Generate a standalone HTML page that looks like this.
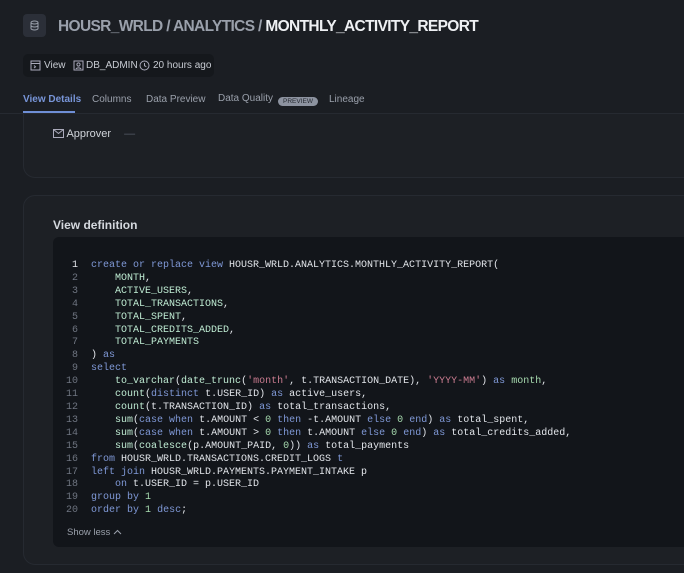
<!DOCTYPE html>
<html><head><meta charset="utf-8"><style>
*{margin:0;padding:0;box-sizing:border-box}
html,body{width:684px;height:573px;overflow:hidden}
body{background:#1b1e23;font-family:"Liberation Sans",sans-serif;position:relative;color:#d8dbe0}
.ic{position:absolute;left:23px;top:14px;width:23px;height:23px;background:#2b2f38;border-radius:4px}
.title{position:absolute;left:58px;top:18px;font-size:15.5px;font-weight:bold;color:#9aa0ab;letter-spacing:-0.65px;white-space:nowrap}
.title b{color:#eef0f3}
.meta{position:absolute;left:23px;top:54px;width:191px;height:23px;background:#15181c;border-radius:5px;font-size:10px;color:#c7cbd2;white-space:nowrap}
.meta span{position:absolute;top:6px}
.tabs{position:absolute;left:0;top:90px;width:684px;height:24px;border-bottom:1px solid #262a31;font-size:10px;color:#9aa0ab}
.tabs span{position:absolute;top:4px;white-space:nowrap}
.tabs .act{color:#7895d8;left:23px;font-weight:bold}
.ul{position:absolute;left:23px;top:111px;width:52px;height:2px;background:#6f8fd6}
.pv{display:inline-block;background:#8d93a0;color:#262a31;font-size:6.5px;border-radius:6px;padding:1px 5px;margin-left:5px;vertical-align:1px}
.card1{position:absolute;left:23px;top:113px;width:700px;height:65px;border:1px solid #262a31;border-top:none;border-radius:0 0 12px 12px;background:#1d2025}
.card2{position:absolute;left:23px;top:195px;width:700px;height:370px;border:1px solid #262a31;border-radius:12px;background:#1d2025}
.appr{position:absolute;left:53px;top:128px;font-size:11px;color:#d0d4da}
.vd{position:absolute;left:53px;top:218px;font-size:12px;font-weight:bold;color:#d4d8de}
.code{position:absolute;left:53px;top:237px;width:700px;height:310px;background:#12151a;border-radius:6px}
pre{position:absolute;left:60px;top:260px;font-family:"Liberation Mono",monospace;font-size:10px;line-height:12.9px;color:#e2e5ea}
.n{display:inline-block;width:18px;text-align:right;color:#6e7480;margin-right:13px}
.n1{color:#e2e5ea}
.k{color:#7f98d6}.f{color:#bfecd3}.s{color:#c97b8f}.g{color:#a8dcb0}
.sl{position:absolute;left:67px;top:527px;font-size:9.5px;color:#9aa0ab}
</style></head><body>
<div class="card1"></div>
<div class="ic"><svg width="23" height="23" viewBox="0 0 23 23"><ellipse cx="11.5" cy="8.5" rx="3.5" ry="1.5" fill="none" stroke="#9aa0ab"/><path d="M8 8.5v6c0 .8 1.6 1.5 3.5 1.5s3.5-.7 3.5-1.5v-6M8 11.5c0 .8 1.6 1.5 3.5 1.5s3.5-.7 3.5-1.5" fill="none" stroke="#9aa0ab"/></svg></div>
<div class="title">HOUSR_WRLD / ANALYTICS / <b>MONTHLY_ACTIVITY_REPORT</b></div>
<div class="meta">
<svg style="position:absolute;left:7px;top:6px" width="11" height="11" viewBox="0 0 11 11"><rect x="1" y="1" width="9" height="9" fill="none" stroke="#aab" /><path d="M1 3.5h9M4 5.5l1.5 1.3L4 8" fill="none" stroke="#aab"/></svg>
<span style="left:21px">View</span>
<svg style="position:absolute;left:50px;top:6px" width="11" height="11" viewBox="0 0 11 11"><rect x="1" y="1" width="9" height="9" fill="none" stroke="#aab"/><circle cx="5.5" cy="4.5" r="1.6" fill="none" stroke="#aab"/><path d="M3 9c.5-1.5 4.5-1.5 5 0" fill="none" stroke="#aab"/></svg>
<span style="left:63px">DB_ADMIN</span>
<svg style="position:absolute;left:116px;top:6px" width="11" height="11" viewBox="0 0 11 11"><circle cx="5.5" cy="5.5" r="4.5" fill="none" stroke="#aab"/><path d="M5.5 3v2.7l1.8 1" fill="none" stroke="#aab"/></svg>
<span style="left:130px">20 hours ago</span>
</div>
<div class="tabs">
<span class="act">View Details</span><span style="left:92px">Columns</span><span style="left:146px">Data Preview</span><span style="left:218px;top:3px">Data Quality<span class="pv">PREVIEW</span></span><span style="left:329px">Lineage</span>
</div>
<div class="ul"></div>
<div class="appr"><svg width="11" height="9" viewBox="0 0 11 9" style="vertical-align:-1px"><rect x=".5" y=".5" width="10" height="8" fill="none" stroke="#aab"/><path d="M.5 .5l5 4 5-4" fill="none" stroke="#aab"/></svg> Approver <span style="color:#555b66;margin-left:10px">—</span></div>
<div class="card2"></div>
<div class="vd">View definition</div>
<div class="code"></div>
<pre><span class="n n1">1</span><span class="k">create or replace view</span> HOUSR_WRLD.ANALYTICS.MONTHLY_ACTIVITY_REPORT(
<span class="n">2</span>    <span class="f">MONTH</span>,
<span class="n">3</span>    <span class="f">ACTIVE_USERS</span>,
<span class="n">4</span>    <span class="f">TOTAL_TRANSACTIONS</span>,
<span class="n">5</span>    <span class="f">TOTAL_SPENT</span>,
<span class="n">6</span>    <span class="f">TOTAL_CREDITS_ADDED</span>,
<span class="n">7</span>    <span class="f">TOTAL_PAYMENTS</span>
<span class="n">8</span>) <span class="k">as</span>
<span class="n">9</span><span class="k">select</span>
<span class="n">10</span>    <span class="f">to_varchar</span>(<span class="f">date_trunc</span>(<span class="s">'month'</span>, t.TRANSACTION_DATE), <span class="s">'YYYY-MM'</span>) <span class="k">as</span> <span class="g">month</span>,
<span class="n">11</span>    <span class="f">count</span>(<span class="k">distinct</span> t.USER_ID) <span class="k">as</span> active_users,
<span class="n">12</span>    <span class="f">count</span>(t.TRANSACTION_ID) <span class="k">as</span> total_transactions,
<span class="n">13</span>    <span class="f">sum</span>(<span class="k">case when</span> t.AMOUNT &lt; <span class="g">0</span> <span class="k">then</span> -t.AMOUNT <span class="k">else</span> <span class="g">0</span> <span class="k">end</span>) <span class="k">as</span> total_spent,
<span class="n">14</span>    <span class="f">sum</span>(<span class="k">case when</span> t.AMOUNT &gt; <span class="g">0</span> <span class="k">then</span> t.AMOUNT <span class="k">else</span> <span class="g">0</span> <span class="k">end</span>) <span class="k">as</span> total_credits_added,
<span class="n">15</span>    <span class="f">sum</span>(<span class="f">coalesce</span>(p.AMOUNT_PAID, <span class="g">0</span>)) <span class="k">as</span> total_payments
<span class="n">16</span><span class="k">from</span> HOUSR_WRLD.TRANSACTIONS.CREDIT_LOGS <span class="k">t</span>
<span class="n">17</span><span class="k">left join</span> HOUSR_WRLD.PAYMENTS.PAYMENT_INTAKE p
<span class="n">18</span>    <span class="k">on</span> t.USER_ID = p.USER_ID
<span class="n">19</span><span class="k">group by</span> <span class="g">1</span>
<span class="n">20</span><span class="k">order by</span> <span class="g">1</span> <span class="k">desc</span>;</pre>
<div class="sl">Show less <svg width="9" height="6" viewBox="0 0 9 6"><path d="M1 5l3.5-3.5L8 5" fill="none" stroke="#9aa0ab"/></svg></div>
</body></html>
